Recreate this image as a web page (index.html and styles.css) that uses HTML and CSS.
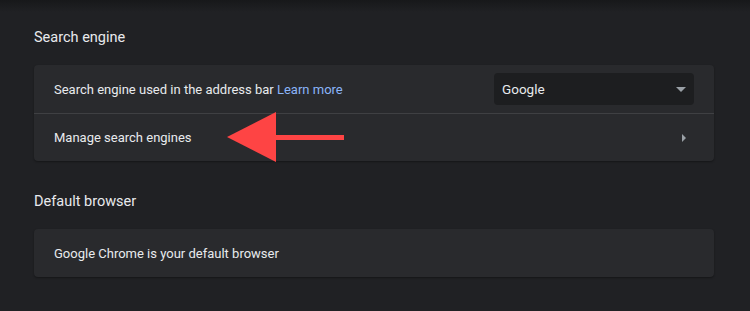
FILE: index.html
```html
<!DOCTYPE html>
<html lang="en">
<head>
  <meta charset="UTF-8">
  <title>Settings</title>
  <meta name="viewport" content="width=device-width, initial-scale=1.0">
  <link rel="stylesheet" href="styles.css">
</head>
<body>
  <div class="top-shadow"></div>
  <main class="settings">
    <section class="section">
      <h2 class="section-title">Search engine</h2>
      <div class="card">
        <div class="row">
          <span class="row-label">Search engine used in the address bar <a href="#" class="link">Learn more</a></span>
          <div class="select">
            <span>Google</span>
            <span class="select-arrow"></span>
          </div>
        </div>
        <div class="row row-link">
          <span class="row-label">Manage search engines</span>
          <span class="chevron"></span>
          <!-- annotation arrow drawn over the row -->
          <svg class="callout" width="120" height="52" viewBox="0 0 120 52">
            <polygon points="0,25 49,0 49,50" fill="#fe4444"/>
            <rect x="48" y="23" width="69" height="5" fill="#fe4444"/>
          </svg>
        </div>
      </div>
    </section>

    <section class="section">
      <h2 class="section-title">Default browser</h2>
      <div class="card">
        <div class="row">
          <span class="row-label">Google Chrome is your default browser</span>
        </div>
      </div>
    </section>
  </main>
</body>
</html>
```

FILE: styles.css
```css
body {
  margin: 0;
  padding: 0;
  background: #202124;
  font-family: Roboto, "Liberation Sans", Arial, sans-serif;
  color: #e8eaed;
  min-height: 100vh;
}
.top-shadow {
  height: 12px;
  background: linear-gradient(#17181a, #202124);
}
.settings {
  width: 680px;
  margin-left: 34px;
  padding-top: 16px;
}
.section {
  margin-bottom: 31px;
}
.section-title {
  margin: 0 0 17px 0;
  font-size: 14.5px;
  line-height: 20px;
  font-weight: 400;
  color: #e8eaed;
}
.card {
  background: #292a2d;
  border-radius: 4px;
  box-shadow: 0 1px 2px rgba(0,0,0,0.35);
}
.row {
  position: relative;
  display: flex;
  align-items: center;
  justify-content: space-between;
  height: 48px;
  padding: 0 20px;
  font-size: 13px;
}
.row + .row {
  border-top: 1px solid #3f4043;
  height: 47px;
}
.row-label {
  color: #e8eaed;
}
.link {
  color: #8ab4f8;
  text-decoration: none;
}
.select {
  display: flex;
  align-items: center;
  justify-content: space-between;
  width: 200px;
  height: 32px;
  box-sizing: border-box;
  padding: 0 8px 0 8px;
  background: #1d1e20;
  border-radius: 4px;
  color: #e8eaed;
  font-size: 13.5px;
}
.select-arrow {
  width: 0;
  height: 0;
  border-left: 5px solid transparent;
  border-right: 5px solid transparent;
  border-top: 5px solid #9aa0a6;
}
.chevron {
  width: 0;
  height: 0;
  border-top: 4px solid transparent;
  border-bottom: 4px solid transparent;
  border-left: 4px solid #9aa0a6;
  margin-right: 8px;
}
.callout {
  position: absolute;
  left: 193px;
  top: -2px;
}
```
